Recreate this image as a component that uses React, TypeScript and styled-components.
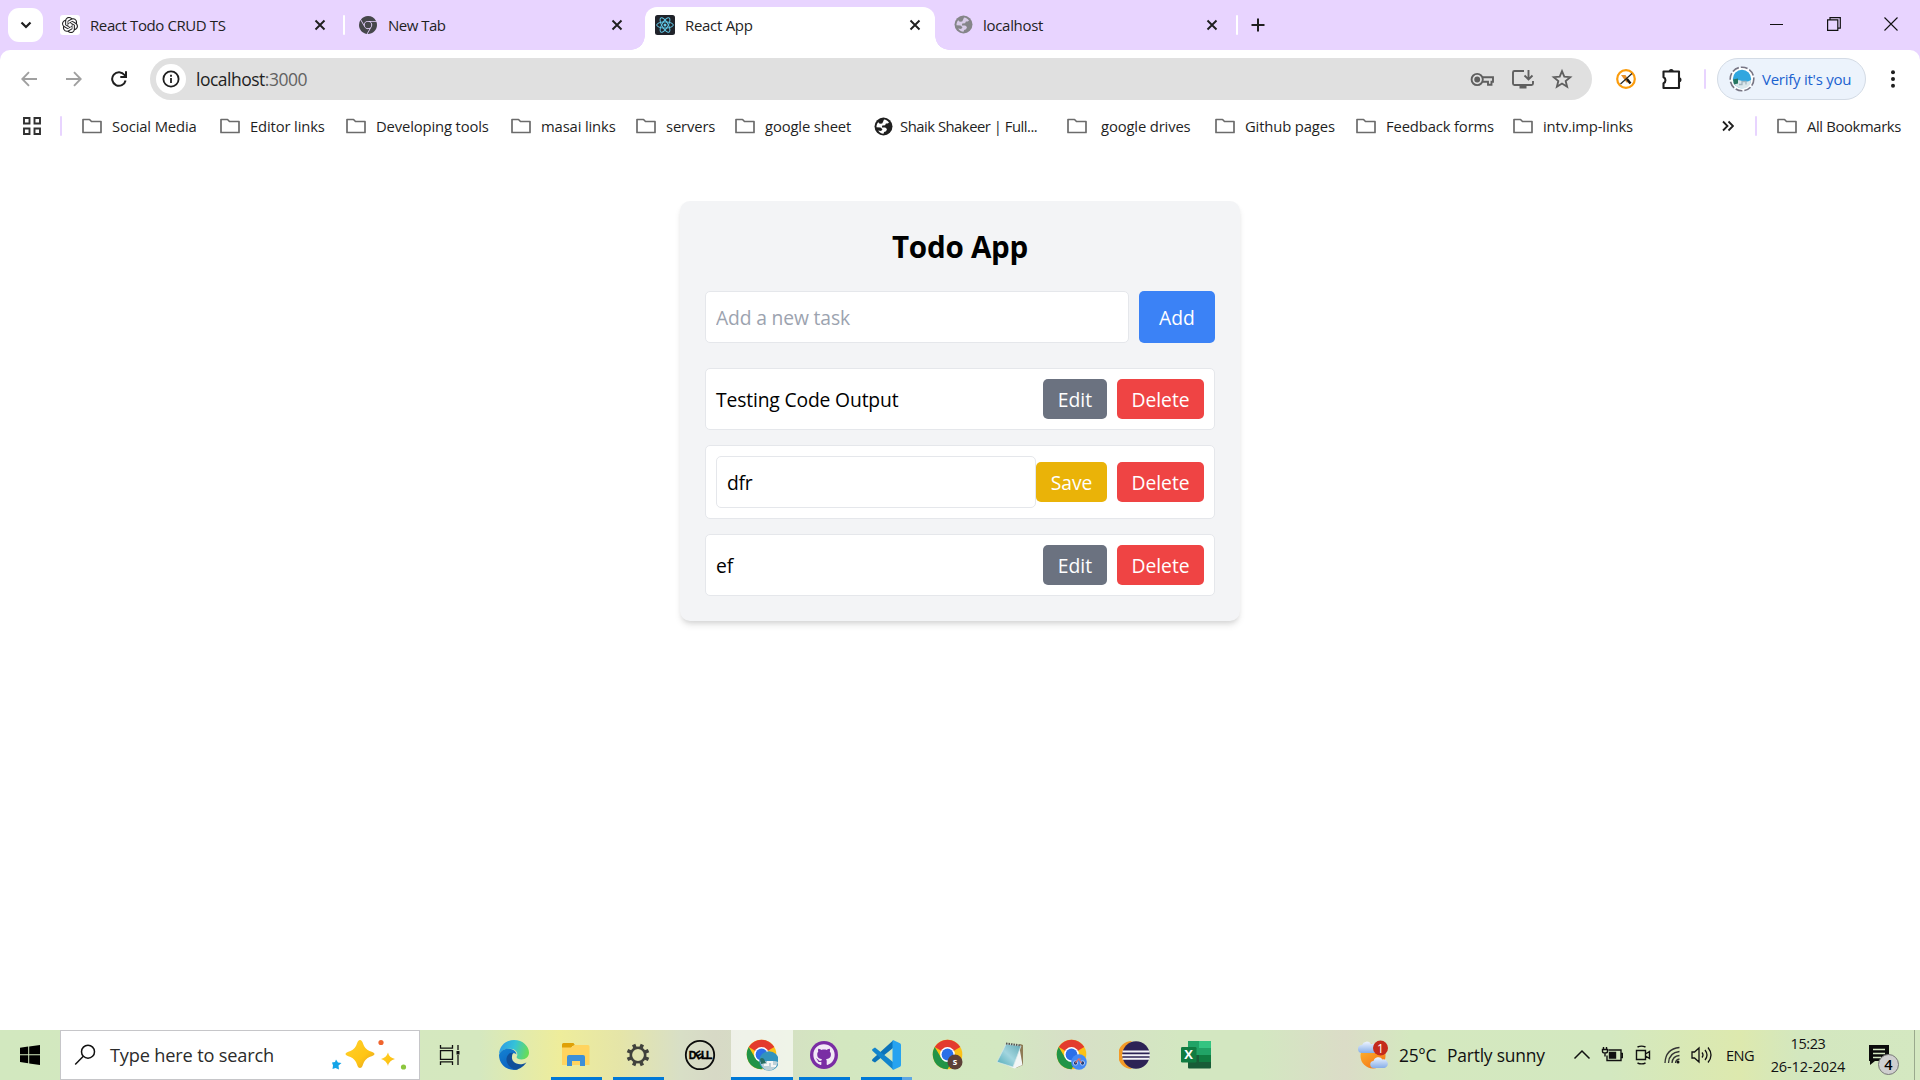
import React from "react";
import styled, { createGlobalStyle, css } from "styled-components";
import { SiOpenai, SiGooglechrome } from "react-icons/si";
import { FaGithub } from "react-icons/fa";

const Global = createGlobalStyle`
  * { box-sizing: border-box; }
  body { margin: 0; background: #fff; overflow: hidden; font-family: "Segoe UI", "Open Sans", "Noto Sans", sans-serif; }
  button, input { font: inherit; }
  svg { display: block; flex: none; }
`;

const Screen = styled.div`
  width: 1920px;
  height: 1080px;
  display: flex;
  flex-direction: column;
  background: #fff;
`;

/* ---------- tab strip ---------- */
const TabStrip = styled.header`
  height: 50px;
  flex: none;
  display: flex;
  align-items: stretch;
  padding: 0 1px 0 8px;
  background: #e8d4ff;
`;
const TabSearch = styled.button`
  width: 35px;
  height: 34px;
  margin: 8px 6px 0 0;
  padding: 0;
  border: 0;
  border-radius: 11px;
  background: #fff;
  display: grid;
  place-items: center;
`;
const Tab = styled.div<{ $w: number; $active?: boolean; $l?: number; $r?: number }>`
  position: relative;
  width: ${(p) => p.$w}px;
  flex: none;
  display: flex;
  align-items: center;
  padding: 0 ${(p) => p.$r ?? 12}px 8px ${(p) => p.$l ?? 11}px;
  margin-top: 7px;
  height: 43px;
  font-size: 15px;
  color: #1f1f1f;
  ${(p) =>
    p.$active &&
    css`
      background: #fff;
      border-radius: 12px 12px 0 0;
      &::before, &::after {
        content: "";
        position: absolute;
        bottom: 0;
        width: 14px;
        height: 14px;
      }
      &::before { left: -14px; background: radial-gradient(circle at 0 0, transparent 13.5px, #fff 14px); }
      &::after { right: -14px; background: radial-gradient(circle at 100% 0, transparent 13.5px, #fff 14px); }
    `}
`;
const Favicon = styled.span<{ $plate?: boolean }>`
  width: 20px;
  height: 20px;
  margin-right: 10px;
  display: grid;
  place-items: center;
  flex: none;
  border-radius: 3px;
  color: #222;
  background: ${(p) => (p.$plate ? "#fff" : "none")};
`;
const Text = styled.span<{ $ls?: number }>`
  white-space: pre;
  letter-spacing: ${(p) => p.$ls ?? 0}px;
`;
const Grow = styled.span`
  flex: 1;
`;
const Divider = styled.i<{ $c?: string; $m?: string }>`
  width: 2px;
  height: 20px;
  border-radius: 1px;
  flex: none;
  align-self: center;
  background: ${(p) => p.$c ?? "#e8d4ff"};
  margin: ${(p) => p.$m ?? "0"};
`;
const NewTab = styled.span`
  width: 40px;
  display: grid;
  place-items: center;
`;
const WindowControls = styled.div`
  display: flex;
  margin-left: auto;
`;
const WindowButton = styled.span`
  width: 57px;
  height: 48px;
  display: grid;
  place-items: center;
`;

/* ---------- toolbar ---------- */
const ToolbarBack = styled.div`
  flex: none;
  background: #e8d4ff;
`;
const Toolbar = styled.div`
  height: 58px;
  display: flex;
  align-items: center;
  background: #fff;
  border-radius: 10px 10px 0 0;
  padding-left: 6px;
`;
const NavButton = styled.span`
  width: 45px;
  height: 40px;
  display: grid;
  place-items: center;
`;
const AddressBar = styled.div`
  width: 1442px;
  height: 42px;
  margin-left: 9px;
  border-radius: 21px;
  background: #e0e0e0;
  display: flex;
  align-items: center;
  padding: 0 19px 0 6px;
  font-size: 17.5px;
  color: #1f1f1f;
`;
const SiteInfo = styled.span`
  width: 30px;
  height: 30px;
  border-radius: 50%;
  background: #fff;
  display: grid;
  place-items: center;
  margin-right: 10px;
`;
const Port = styled.span`
  color: #626262;
`;
const BarIcons = styled.div`
  display: flex;
  gap: 16.500px;
  margin-left: auto;
`;
const Extensions = styled.div`
  display: flex;
  align-items: center;
  margin-left: 21px;
  gap: 21px;
`;
const ProfilePill = styled.div`
  width: 149px;
  height: 42px;
  margin-left: 11px;
  border: 1px solid #d3dbe5;
  border-radius: 21px;
  background: #ecf3fc;
  color: #1b62cf;
  display: flex;
  align-items: center;
  padding-left: 11px;
  gap: 7px;
  font-size: 15px;
`;
const Menu = styled.span`
  width: 54px;
  display: grid;
  place-items: center;
`;

/* ---------- bookmarks ---------- */
const Bookmarks = styled.nav`
  height: 43px;
  flex: none;
  display: flex;
  align-items: flex-start;
  padding: 7px 0 0 22px;
  font-size: 14.8px;
  line-height: 22px;
  color: #1f1f1f;
`;
const Bookmark = styled.div<{ $w: number; $gap?: number }>`
  width: ${(p) => p.$w}px;
  height: 22px;
  flex: none;
  display: flex;
  align-items: center;
  gap: ${(p) => p.$gap ?? 10}px;
`;
const AppsButton = styled.div`
  width: 60px;
  height: 22px;
  display: flex;
  align-items: center;
  justify-content: space-between;
  padding-right: 20px;
`;
const BookmarkRest = styled.div`
  display: flex;
  height: 22px;
  align-items: center;
  margin-left: auto;
  width: 198px;
`;

/* ---------- page ---------- */
const Page = styled.main`
  flex: 1;
  padding-top: 50px;
  display: flex;
  justify-content: center;
  align-items: flex-start;
`;
const Card = styled.section`
  width: 560px;
  padding: 25px;
  border-radius: 10px;
  background: #f3f4f6;
  box-shadow: 0 5px 7.5px -1px rgba(0, 0, 0, 0.1), 0 2.5px 5px -2px rgba(0, 0, 0, 0.1);
  font-size: 19.3px;
  line-height: 30px;
  color: #000;
`;
const Title = styled.h1`
  margin: 0 0 24px;
  padding-top: 1px;
  text-align: center;
  font-size: 29.6px;
  line-height: 40px;
  font-weight: 700;
  letter-spacing: -0.25px;
`;
const AddRow = styled.div`
  display: flex;
  gap: 10px;
  margin-bottom: 25px;
`;
const Field = styled.input<{ $ls?: number }>`
  flex: 1;
  min-width: 0;
  height: 52px;
  padding: 10px;
  border: 1px solid #e5e7eb;
  border-radius: 5px;
  background: #fff;
  color: #000;
  outline: 0;
  letter-spacing: ${(p) => p.$ls ?? 0}px;
  &::placeholder { color: #9ca3af; opacity: 1; }
`;
const tones = { add: "#3b82f6", edit: "#6b7280", save: "#eab308", remove: "#ef4444" };
const Button = styled.button<{ $tone: keyof typeof tones; $w: number; $h?: number }>`
  width: ${(p) => p.$w}px;
  height: ${(p) => p.$h ?? 40}px;
  padding: 2px 0 0;
  border: 0;
  border-radius: 5px;
  color: #fff;
  background: ${(p) => tones[p.$tone]};
`;
const List = styled.ul`
  margin: 0;
  padding: 0;
  list-style: none;
  display: flex;
  flex-direction: column;
  gap: 15px;
`;
const Item = styled.li`
  display: flex;
  align-items: center;
  justify-content: space-between;
  padding: 10px;
  border: 1px solid #e5e7eb;
  border-radius: 5px;
  background: #fff;
`;
const TaskName = styled.span`
  padding-top: 2px;
  letter-spacing: -0.15px;
`;
const Actions = styled.div`
  display: flex;
  gap: 10px;
`;

/* ---------- taskbar ---------- */
const Taskbar = styled.footer`
  height: 50px;
  flex: none;
  display: flex;
  background: linear-gradient(90deg, #d2e8bf 0, #d5e8bf 480px, #eeed9b 560px, #e5e5a8 620px, #d8dfc6 680px, #d7d9c6 715px, #d3e7c0 840px, #d3e8c1 1000px, #d7dfc7 1070px, #d3e7c1 1180px, #d3e7c1 1260px, #dbdcc7 1345px, #d4e8bf 1410px, #d3e8c0 1610px, #dde9ae 1740px, #d3e7bf 1800px, #d4e8c1 100%);
`;
const Start = styled.span`
  width: 60px;
  display: grid;
  place-items: center;
`;
const SearchBox = styled.div`
  width: 360px;
  height: 50px;
  background: #fff;
  border: 1px solid #c6c6c9;
  display: flex;
  align-items: center;
  padding: 0 11px 0 13px;
  font-size: 18.2px;
  color: #2b2b2b;
  gap: 14px;
`;
const TaskView = styled.span`
  width: 63px;
  display: grid;
  place-items: center;
  padding-right: 4px;
`;
const AppSlot = styled.span<{ $active?: boolean; $open?: boolean; $stacked?: boolean }>`
  width: 62px;
  height: 50px;
  flex: none;
  display: grid;
  place-items: center;
  position: relative;
  background: ${(p) => (p.$active ? "rgba(255,255,255,.62)" : "none")};
  &::after {
    content: "";
    display: ${(p) => (p.$open || p.$active ? "block" : "none")};
    position: absolute;
    bottom: 0;
    left: ${(p) => (p.$active ? 0 : 6)}px;
    right: ${(p) => (p.$active ? 0 : 5)}px;
    height: 3px;
    background: ${(p) => (p.$stacked ? "linear-gradient(90deg, #0078d7 41px, #5ea7e3 41px)" : "#0078d7")};
  }
`;
const Tray = styled.div`
  margin-left: auto;
  display: flex;
  align-items: center;
  width: 562px;
  font-size: 17.4px;
  color: #111;
`;
const Temperature = styled.span`
  margin-left: 11px;
  width: 48px;
  letter-spacing: -0.3px;
`;
const Sky = styled.span`
  width: 96px;
  white-space: nowrap;
  letter-spacing: -0.2px;
`;
const TrayIcons = styled.div`
  display: flex;
  align-items: center;
  margin-left: 28px;
  gap: 8px;
`;
const Lang = styled.span`
  font-size: 14.6px;
  margin-left: 13px;
  width: 30px;
  letter-spacing: -0.5px;
`;
const Clock = styled.div`
  width: 96px;
  margin-left: 4px;
  text-align: center;
  font-size: 14.5px;
  line-height: 23px;
  letter-spacing: -0.1px;
`;
const ClockTime = styled.div`
  letter-spacing: -0.4px;
`;
const Notice = styled.span`
  margin-left: 13px;
`;
const DesktopEdge = styled.i`
  width: 6px;
  height: 50px;
  margin-left: auto;
  border-left: 1px solid #9aa98d;
`;

/* ---------- icons ---------- */
const Cross = () => (
  <svg width="12" height="12" viewBox="0 0 12 12" stroke="#1f1f1f" strokeWidth="1.9"><path d="M1.5 1.5l9 9M10.5 1.5l-9 9" /></svg>
);
const Folder = () => (
  <svg width="20" height="16" viewBox="0 0 20 16" fill="none" stroke="#6b6b6b" strokeWidth="1.7">
    <path d="M1 13.5v-12h6.5l2 2H19v11H1z" strokeLinejoin="round" />
  </svg>
);
const Globe = ({ color, hole }: { color: string; hole: string }) => (
  <svg width="19" height="19" viewBox="0 0 19 19">
    <circle cx="9.5" cy="9.5" r="9" fill={color} />
    <path d="M10 2.4c2 .2 4 1.6 5 3.3l-1.5.7-1.6.2-.8 1.6-2.8.2-.5 2 3.4.2 1.8 1.5-.9 2.2-2 .6-.6 1.9c-2.2-.1-4.4-1.5-5.3-3.2l2.900.3 1.4-1.6-2-1.7-4-.4c-.1-2 .6-3.700 1.700-4.900l1.600 1.500 2.400-.2 1-2z" fill={hole} />
  </svg>
);
const ReactLogo = () => (
  <svg width="20" height="20" viewBox="0 0 20 20" fill="none" stroke="#61c9e8">
    <rect width="20" height="20" rx="2.5" fill="#20232a" stroke="none" />
    {[0, 60, 120].map((a) => <ellipse key={a} cx="10" cy="10" rx="8.3" ry="3.1" transform={`rotate(${a} 10 10)`} />)}
    <circle cx="10" cy="10" r="1.5" fill="#61c9e8" stroke="none" />
  </svg>
);
const Edge = () => (
  <svg width="30" height="30" viewBox="0 0 30 30">
    <defs>
      <linearGradient id="edgeTop" x1="0" y1=".3" x2="1" y2=".5"><stop stopColor="#2c9be6" /><stop offset=".5" stopColor="#35c3d8" /><stop offset="1" stopColor="#69dd55" /></linearGradient>
      <linearGradient id="edgeLow" x1="0" y1="0" x2=".5" y2="1"><stop stopColor="#1482d3" /><stop offset="1" stopColor="#0b62c0" /></linearGradient>
    </defs>
    <path d="M0 14C.5 5.5 7 0 15 0c9 0 15 6.500 15 12.500 0 4-3 7-7.500 7-3.500 0-5.500-1.400-4.700-2.900 1.200-2.200.7-6.600-5-7.600C7.500 8.100 2.400 10 0 14z" fill="url(#edgeTop)" />
    <path d="M0 15c1-4 5.500-6.800 10.500-6.200 4 .5 6.800 3 7 5.700-2-2.400-6.500-1.500-7.300 2.500C9.400 22 13 28 19.500 29.300 9 32 0 25 0 15z" fill="url(#edgeLow)" />
    <path d="M9 15c-4 5 0 13 8 14.700 4-.7 8.500-3.700 10.500-7.400-4 3-10 2.700-13-.7C12.500 19.300 12.500 16 14 13c-2-.5-4 .5-5 2z" fill="#10509a" />
  </svg>
);
const Explorer = () => (
  <svg width="28" height="24" viewBox="0 0 28 24">
    <path d="M0 1.500Q0 0 1.500 0h10l2 3h-3L9 5H0z" fill="#dfa107" />
    <path d="M0 4.500h9.500L12 2h14q1.500 0 1.500 1.500V22H0z" fill="#ffd45f" />
    <path d="M5 23V14q0-2 2-2h14q2 0 2 2v9h-5v-5h-8v5z" fill="#3d8fd8" />
  </svg>
);
const Gear = () => (
  <svg width="24" height="24" viewBox="0 0 24 24" fill="none" stroke="#41423d">
    <circle cx="12" cy="12" r="7.2" strokeWidth="2.6" />
    {[22.5, 67.5, 112.5, 157.5, 202.5, 247.5, 292.5, 337.5].map((a) => <path key={a} transform={`rotate(${a} 12 12)`} d="M12 .6v4" strokeWidth="3.6" />)}
  </svg>
);
const Dell = () => (
  <svg width="32" height="32" viewBox="0 0 32 32">
    <circle cx="16" cy="16" r="14.2" fill="none" stroke="#0b0b0b" strokeWidth="1.8" />
    <g fontFamily="Liberation Sans, sans-serif" fontWeight="700" fontSize="10.5" stroke="#000" strokeWidth=".35">
      <text x="4.700" y="19.800">D</text>
      <text x="11.500" y="19.800" transform="rotate(-32 14.700 16)">E</text>
      <text x="17" y="19.800">L</text>
      <text x="22" y="19.800">L</text>
    </g>
  </svg>
);
const Chrome = ({ badge }: { badge: "photo" | "letter" | "bike" }) => (
  <svg width="32" height="32" viewBox="0 0 32 32">
    <circle cx="15.5" cy="15.5" r="14.8" fill="#fbc116" />
    <path d="M15.5 15.5L2.7 8.1A14.8 14.8 0 0 1 28.3 8.1z" fill="#e33b2e" />
    <path d="M2.7 8.1A14.8 14.8 0 0 0 15.5 30.3l6.400-11.100-6.400 1.500-6.400-2z" fill="#219447" />
    <circle cx="15.5" cy="15.5" r="7.4" fill="#fff" />
    <circle cx="15.5" cy="15.5" r="5.9" fill="#2b6fe8" />
    {badge === "photo" && (
      <g><circle cx="23" cy="22" r="9.800" fill="#3293bd" /><path d="M14 23q5-2 9 0 5-2 9 0-1 6-7 8.500-8 1-11-8.500z" fill="#bcd0d8" /><path d="M14 20q2-2 4 0l2 4-5 1z" fill="#286e62" /><path d="M18 26h4v-3h4v4h4" stroke="#f4f5f4" strokeWidth="2" fill="none" /></g>
    )}
    {badge === "letter" && (
      <g><circle cx="23" cy="23" r="7.500" fill="#5c4038" /><text x="23" y="26.200" textAnchor="middle" fontSize="9" fontWeight="700" fill="#fff" fontFamily="Open Sans, sans-serif">s</text></g>
    )}
    {badge === "bike" && (
      <g><circle cx="23" cy="23" r="7.800" fill="#4389f5" /><circle cx="19.500" cy="24" r="2.200" fill="#23417e" stroke="#a9c9f7" /><circle cx="26.500" cy="24" r="2.200" fill="#23417e" stroke="#a9c9f7" /><path d="M19.500 24l3-4 3 4M22 20h3" stroke="#e7725f" strokeWidth="1.200" fill="none" /></g>
    )}
  </svg>
);
const GithubDisc = styled.span`
  width: 28px;
  height: 28px;
  border-radius: 50%;
  background: #7a2da4;
  color: #f2e9f6;
  display: grid;
  place-items: center;
`;
const VsCode = () => (
  <svg width="30" height="30" viewBox="0 0 30 30">
    <path d="M22 .5v7.600L4 22.500 1.600 21.200q-1.400-1 0-2.200z" fill="#0b73b9" />
    <path d="M1.600 8.900L4 7.500 22 21.900v7.600L1.600 11.100q-1.200-1.200 0-2.200z" fill="#1284cc" />
    <path d="M22 0l7 3.300q1 .5 1 1.700v20q0 1.200-1 1.700L22 30q-.5-.7-.5-2V2q0-1.300.5-2z" fill="#27a3f0" />
  </svg>
);
const Notepad = () => (
  <svg width="28" height="27" viewBox="0 0 28 27">
    <defs><linearGradient id="note" x1="0" y1="1" x2="1" y2="0"><stop stopColor="#4aa8b5" /><stop offset=".5" stopColor="#a2d5df" /><stop offset="1" stopColor="#62a9b4" /></linearGradient></defs>
    <path d="M24 2l3 1v20l-7 3z" fill="#8e7b55" />
    <path d="M23 3l3.500 20-8 3.500-5-2z" fill="#f3f6f6" />
    <path d="M10 2l15 2-8 21L1 20z" fill="url(#note)" stroke="#dce9e9" strokeWidth=".7" />
    <path d="M10 1.500l15 2" stroke="#555" strokeWidth="2" strokeDasharray="1.500 1" />
  </svg>
);
const Eclipse = () => (
  <svg width="31" height="28" viewBox="0 0 31 28">
    <path d="M13 0A14 14 0 0 0 13 28L10 25A14 14 0 0 1 10 3z" fill="#f49a26" />
    <circle cx="17" cy="14" r="13.700" fill="#2c2255" />
    <path d="M3.500 10.500h27M3 14.200h28M3.500 17.800h27" stroke="#f4f3f8" strokeWidth="1.900" />
  </svg>
);
const Excel = () => (
  <svg width="30" height="28" viewBox="0 0 30 28">
    <rect x="7" width="11.500" height="14" fill="#21a366" /><rect x="18" width="12" height="7" fill="#33c481" />
    <rect x="18" y="7" width="12" height="7" fill="#21a366" /><rect x="7" y="14" width="23" height="13.500" rx="1" fill="#185c37" />
    <rect x="18" y="14" width="12" height="7" fill="#107c41" />
    <rect y="6" width="15.500" height="15.500" rx="1.300" fill="#107c41" />
    <text x="7.700" y="18.400" textAnchor="middle" fontSize="13" fontWeight="700" fill="#fff" fontFamily="Open Sans, sans-serif">X</text>
  </svg>
);
const Sparkles = () => (
  <svg width="76" height="32" viewBox="0 0 76 32">
    <defs><linearGradient id="spark" x1="0" y1="0" x2="1" y2="1"><stop stopColor="#ffd02d" /><stop offset=".6" stopColor="#ffc514" /><stop offset="1" stopColor="#dc9b2c" /></linearGradient></defs>
    <path d="M28 1q2 0 3 3.500 1.700 5.500 6.500 7.500 5 1.500 5 3t-5 3q-4.800 2-6.500 7.500-1 3.500-3 3.500t-3-3.500q-1.700-5.500-6.500-7.500-5-1.500-5-3t5-3q4.800-2 6.500-7.500 1-3.500 3-3.500z" fill="url(#spark)" />
    <path d="M56 13.500q1 5 7 6.500-6 1.500-7 7-1.500-5.500-7-7 5.500-1.500 7-6.500z" fill="url(#spark)" />
    <path d="M4 20.500l2 3 3.500.5-3 2.500.5 4-3.500-1.500-3 1 .5-3.500-1-3 3-.5z" fill="#13a4e8" />
    <circle cx="49" cy="3.500" r="2.600" fill="#f0642d" /><circle cx="71.500" cy="28" r="2.600" fill="#8cc63e" />
  </svg>
);
const Weather = () => (
  <svg width="30" height="31" viewBox="0 0 30 31">
    <defs><linearGradient id="sun" x1="0" y1="0" x2=".6" y2="1"><stop stopColor="#ffbf31" /><stop offset="1" stopColor="#f47718" /></linearGradient>
      <linearGradient id="cloud" x1="0" y1="0" x2="0" y2="1"><stop stopColor="#edf4ff" /><stop offset="1" stopColor="#86aee8" /></linearGradient></defs>
    <circle cx="15" cy="16" r="12.500" fill="url(#sun)" />
    <path d="M4 13a4 4 0 0 1 0-8 5 5 0 0 1 9-1 5 5 0 0 1 5 9z" fill="url(#cloud)" />
    <path d="M16 28a3.500 3.500 0 0 1-.5-7 5 5 0 0 1 9-1.500 4.300 4.300 0 0 1 2 8.500z" fill="url(#cloud)" />
    <circle cx="22.500" cy="8" r="7.500" fill="#c42b1c" />
    <text x="22.500" y="12.500" textAnchor="middle" fontSize="12" fill="#fff" fontFamily="Open Sans, sans-serif">1</text>
  </svg>
);

const bookmarks: { name: string; w: number; gap?: number; globe?: boolean; ls?: number }[] = [
  { name: "Social Media", w: 138 },
  { name: "Editor links", w: 126 },
  { name: "Developing tools", w: 165 },
  { name: "masai links", w: 125 },
  { name: "servers", w: 99 },
  { name: "google sheet", w: 139 },
  { name: "Shaik Shakeer | Full...", w: 193, globe: true, gap: 7, ls: -0.48 },
  { name: "google drives", w: 148, gap: 14 },
  { name: "Github pages", w: 141 },
  { name: "Feedback forms", w: 157 },
  { name: "intv.imp-links", w: 130 },
];

export default function App() {
  return (
    <Screen>
      <Global />
      <TabStrip>
        <TabSearch><svg width="12" height="8" viewBox="0 0 12 8" fill="none" stroke="#1f1f1f" strokeWidth="2.2"><path d="M1.5 1.5L6 6l4.5-4.5" /></svg></TabSearch>
        <Tab $w={289}><Favicon $plate><SiOpenai size={16} /></Favicon><Text $ls={-0.4}>React Todo CRUD TS</Text><Grow /><Cross /></Tab>
        <Divider $c="#fff" $m="0 2px 0 5px" />
        <Tab $w={298} $r={22}><Favicon><SiGooglechrome size={18} color="#46474b" /></Favicon><Text $ls={-0.5}>New Tab</Text><Grow /><Cross /></Tab>
        <Tab $w={290} $l={10} $r={14} $active><Favicon><ReactLogo /></Favicon><Text $ls={-0.3}>React App</Text><Grow /><Cross /></Tab>
        <Tab $w={297} $l={18} $r={14}><Favicon><Globe color="#858589" hole="#d8cbe8" /></Favicon><Text $ls={-0.3}>localhost</Text><Grow /><Cross /></Tab>
        <Divider $c="#fff" $m="0 0 0 4px" />
        <NewTab><svg width="14" height="14" viewBox="0 0 14 14" stroke="#1f1f1f" strokeWidth="2"><path d="M7 .5v13M.5 7h13" /></svg></NewTab>
        <WindowControls>
          <WindowButton><svg width="13" height="13" viewBox="0 0 13 13" stroke="#111"><path d="M0 6.5h13" /></svg></WindowButton>
          <WindowButton><svg width="14" height="14" viewBox="0 0 14 14" fill="none" stroke="#111" strokeWidth="1.2"><path d="M.6 2.9h10.2v10.5H.6zM3 2.9V.6h10.3v10.5h-2.5" /></svg></WindowButton>
          <WindowButton><svg width="14" height="14" viewBox="0 0 14 14" stroke="#111" strokeWidth="1.1"><path d="M.5.5l13 13M13.5.5l-13 13" /></svg></WindowButton>
        </WindowControls>
      </TabStrip>

      <ToolbarBack>
        <Toolbar>
          <NavButton><svg width="16" height="16" viewBox="0 0 16 16" fill="none" stroke="#a0a0a0" strokeWidth="1.9"><path d="M16 8H1.5M8 1.2L1.3 8 8 14.8" /></svg></NavButton>
          <NavButton><svg width="16" height="16" viewBox="0 0 16 16" fill="none" stroke="#a0a0a0" strokeWidth="1.9"><path d="M0 8h14.5M8 1.2L14.7 8 8 14.8" /></svg></NavButton>
          <NavButton><svg width="16" height="16" viewBox="0 0 16 16" fill="none" stroke="#1f1f1f" strokeWidth="2"><path d="M14.6 9.5A6.8 6.8 0 1 1 13.5 4L15 5.8M15 .3v5.7H9.3" /></svg></NavButton>
          <AddressBar>
            <SiteInfo><svg width="18" height="18" viewBox="0 0 18 18" fill="none" stroke="#1f1f1f" strokeWidth="1.8"><circle cx="9" cy="9" r="7.6" /><path d="M9 8v5M9 4.8v1.9" /></svg></SiteInfo>
            <Text $ls={-0.5}>localhost<Port>:3000</Port></Text>
            <BarIcons>
              <svg width="24" height="22" viewBox="0 0 24 22" fill="none" stroke="#5f5f5f" strokeWidth="1.9"><circle cx="7.2" cy="11.5" r="5.600" /><circle cx="7.2" cy="11.5" r="2" fill="#5f5f5f" /><path d="M12.300 9.200H23v4.600h-1.500v3H18v-3h-5.700" /></svg>
              <svg width="24" height="22" viewBox="0 0 24 22" fill="none" stroke="#5f5f5f" strokeWidth="1.9"><path d="M13 3H3.500q-1.500 0-1.500 1.500v11Q2 17 3.500 17h17q1.500 0 1.500-1.500V13M17.500 2v9M13.500 7.500l4 4 4-4" /><path d="M8.500 19h7" strokeWidth="3" /></svg>
              <svg width="22" height="22" viewBox="0 0 24 24" fill="none" stroke="#5f5f5f" strokeWidth="2"><path d="M12 3.500l2.500 6 6.500.5-5 4.200 1.600 6.300L12 17l-5.600 3.500L8 14.200 3 10l6.500-.5z" /></svg>
            </BarIcons>
          </AddressBar>
          <Extensions>
            <svg width="26" height="22" viewBox="0 0 26 22"><circle cx="13" cy="11" r="8.800" fill="#fff" stroke="#fb9c0c" strokeWidth="2.200" /><path d="M8 7h4.500l4.500 7.500h-3.500z" fill="#e7902b" /><path d="M19 5.500L7.500 16" stroke="#222" strokeWidth="1.200" /><path d="M14 11l3.500 4.500" stroke="#171717" strokeWidth="2.400" /></svg>
            <svg width="24" height="24" viewBox="0 0 24 24" fill="none" stroke="#1f1f1f" strokeWidth="2.100"><path d="M3.500 4.500H19v16.500H3.500v-4.800a3.200 3.200 0 0 0 0-5.900z" strokeLinejoin="round" /><path d="M8.700 4.500a2.500 2.500 0 0 1 5 0zM19 10.200a2.500 2.500 0 0 1 0 5z" fill="#1f1f1f" stroke="none" /></svg>
          </Extensions>
          <Divider $m="0 0 0 20px" />
          <ProfilePill>
            <svg width="26" height="26" viewBox="0 0 26 26"><circle cx="13" cy="13" r="11.800" fill="#fff" stroke="#777584" strokeWidth="1.600" strokeDasharray="7 2" /><circle cx="13" cy="13" r="9.200" fill="#31a6df" /><path d="M4 15q4-2 9 0t9-1q0 8.500-9 8.500-7-1-9-7.500z" fill="#dce7eb" /><path d="M4 13.500l5-1v5l-4 1z" fill="#28765f" /><path d="M10 18.500h3v-3h4v3" stroke="#9fb4be" strokeWidth="1.300" fill="none" /></svg>
            <Text $ls={-0.25}>Verify it's you</Text>
          </ProfilePill>
          <Menu><svg width="6" height="18" viewBox="0 0 6 18" fill="#1f1f1f"><circle cx="3" cy="2.200" r="2" /><circle cx="3" cy="9" r="2" /><circle cx="3" cy="15.800" r="2" /></svg></Menu>
        </Toolbar>
      </ToolbarBack>

      <Bookmarks>
        <AppsButton>
          <svg width="20" height="20" viewBox="0 0 20 20" fill="none" stroke="#303030" strokeWidth="1.9"><path d="M2 2h5.500v5.500H2zM12.500 2H18v5.500h-5.500zM2 12.500h5.500V18H2zM12.500 12.500H18V18h-5.500z" /></svg>
          <Divider />
        </AppsButton>
        {bookmarks.map((b) => (
          <Bookmark key={b.name} $w={b.w} $gap={b.gap}>
            {b.globe ? <Globe color="#1f1f1f" hole="#fff" /> : <Folder />}
            <Text $ls={b.ls ?? -0.14}>{b.name}</Text>
          </Bookmark>
        ))}
        <BookmarkRest>
          <svg width="12" height="12" viewBox="0 0 12 12" fill="none" stroke="#1f1f1f" strokeWidth="1.8"><path d="M1 1.500L5.500 6 1 10.500M6.500 1.500L11 6l-4.500 4.500" /></svg>
          <Divider $m="0 20px 0 21px" />
          <Bookmark $w={130}><Folder /><Text $ls={-0.36}>All Bookmarks</Text></Bookmark>
        </BookmarkRest>
      </Bookmarks>

      <Page>
        <Card>
          <Title>Todo App</Title>
          <AddRow>
            <Field placeholder="Add a new task" $ls={-0.15} />
            <Button $tone="add" $w={76} $h={52}>Add</Button>
          </AddRow>
          <List>
            <Item>
              <TaskName>Testing Code Output</TaskName>
              <Actions><Button $tone="edit" $w={64}>Edit</Button><Button $tone="remove" $w={87}>Delete</Button></Actions>
            </Item>
            <Item>
              <Field defaultValue="dfr" $ls={-0.3} />
              <Actions><Button $tone="save" $w={71}>Save</Button><Button $tone="remove" $w={87}>Delete</Button></Actions>
            </Item>
            <Item>
              <TaskName>ef</TaskName>
              <Actions><Button $tone="edit" $w={64}>Edit</Button><Button $tone="remove" $w={87}>Delete</Button></Actions>
            </Item>
          </List>
        </Card>
      </Page>

      <Taskbar>
        <Start><svg width="20" height="20" viewBox="0 0 20 20"><path d="M0 2.800L8.200 1.600v7.700H0zM9.200 1.400L20 0v9.300H9.200zM0 10.300h8.200v7.900L0 17.100zM9.200 10.300H20V20L9.200 18.400z" /></svg></Start>
        <SearchBox>
          <svg width="22" height="22" viewBox="0 0 22 22" fill="none" stroke="#111" strokeWidth="1.5"><circle cx="14" cy="7.700" r="6.500" /><path d="M9.300 12.300L1.200 20.500" /></svg>
          <Text $ls={-0.18}>Type here to search</Text><Grow /><Sparkles />
        </SearchBox>
        <TaskView><svg width="22" height="20" viewBox="0 0 22 20" fill="none" stroke="#111" strokeWidth="1.3"><path d="M1.500 0v3.200h12V0M1.500 20v-3.200h12V20M1.500 5.700h12v8.600h-12zM19 0v5M19 10v10" /><path d="M19 6v3.500" strokeWidth="3" /></svg></TaskView>
        <AppSlot><Edge /></AppSlot>
        <AppSlot $open><Explorer /></AppSlot>
        <AppSlot $open><Gear /></AppSlot>
        <AppSlot><Dell /></AppSlot>
        <AppSlot $active><Chrome badge="photo" /></AppSlot>
        <AppSlot $open><GithubDisc><FaGithub size={22} /></GithubDisc></AppSlot>
        <AppSlot $open $stacked><VsCode /></AppSlot>
        <AppSlot><Chrome badge="letter" /></AppSlot>
        <AppSlot><Notepad /></AppSlot>
        <AppSlot><Chrome badge="bike" /></AppSlot>
        <AppSlot><Eclipse /></AppSlot>
        <AppSlot><Excel /></AppSlot>
        <Tray>
          <Weather />
          <Temperature>25°C</Temperature>
          <Sky>Partly sunny</Sky>
          <TrayIcons>
            <svg width="22" height="22" viewBox="-2 0 22 22" fill="none" stroke="#111" strokeWidth="1.5"><path d="M1.500 14.500L9 7l7.500 7.500" /></svg>
            <svg width="22" height="20" viewBox="-1 0 22 20" fill="none" stroke="#111" strokeWidth="1.4"><path d="M6.500 5h12.500v10.500H5v-5M19 8.500h1.500v4H19M1.500 2v2.500M4.500 2v2.500M.5 4.500h5v2Q5.500 8 3 8T.5 6.500zM3 8v3.500" /><path d="M7.500 7.500h6v5.500h-6z" fill="#111" /></svg>
            <svg width="22" height="22" viewBox="-2 0 22 22" fill="none" stroke="#111" strokeWidth="1.4"><path d="M3.500 6.500h9v9h-9zM12.500 10l4-2.500v7l-4-2.500M4.500 3q4-1.800 8 0M4.500 19q4 1.800 8 0" /></svg>
            <svg width="22" height="20" viewBox="-1.500 0 22 20" fill="none" stroke="#333" strokeWidth="1.3"><path d="M2.500 18Q3 4 17 2.500M6 18Q6.500 7.500 17 6.500M9.500 18q.5-7 7.500-7.500M13 18q.3-3.500 4-4" /><circle cx="15.500" cy="17" r="1.500" fill="#111" stroke="none" /></svg>
            <svg width="22" height="20" viewBox="0 0 22 20" fill="none" stroke="#111" strokeWidth="1.3"><path d="M1 7h2.500L8 3v14l-4.500-4H1zM11 7.500q2 2.500 0 5M14 5q4 5 0 10M17 2.500q6 7.500 0 15" /></svg>
          </TrayIcons>
          <Lang>ENG</Lang>
          <Clock><ClockTime>15:23</ClockTime>26-12-2024</Clock>
          <Notice><svg width="31" height="40" viewBox="0 0 31 40"><path d="M0 10h20v16H6l-5 4v-4H0z" fill="#0b0b0b" /><path d="M4 14.500h12M4 18.500h12M4 22.500h8" stroke="#d4e8c1" strokeWidth="1.500" /><circle cx="19.500" cy="29.500" r="10" fill="#cfcfcf" stroke="#777" /><text x="19.500" y="34.800" textAnchor="middle" fontSize="14.500" fontWeight="600" fontFamily="Open Sans, sans-serif">4</text></svg></Notice>
          <DesktopEdge />
        </Tray>
      </Taskbar>
    </Screen>
  );
}
